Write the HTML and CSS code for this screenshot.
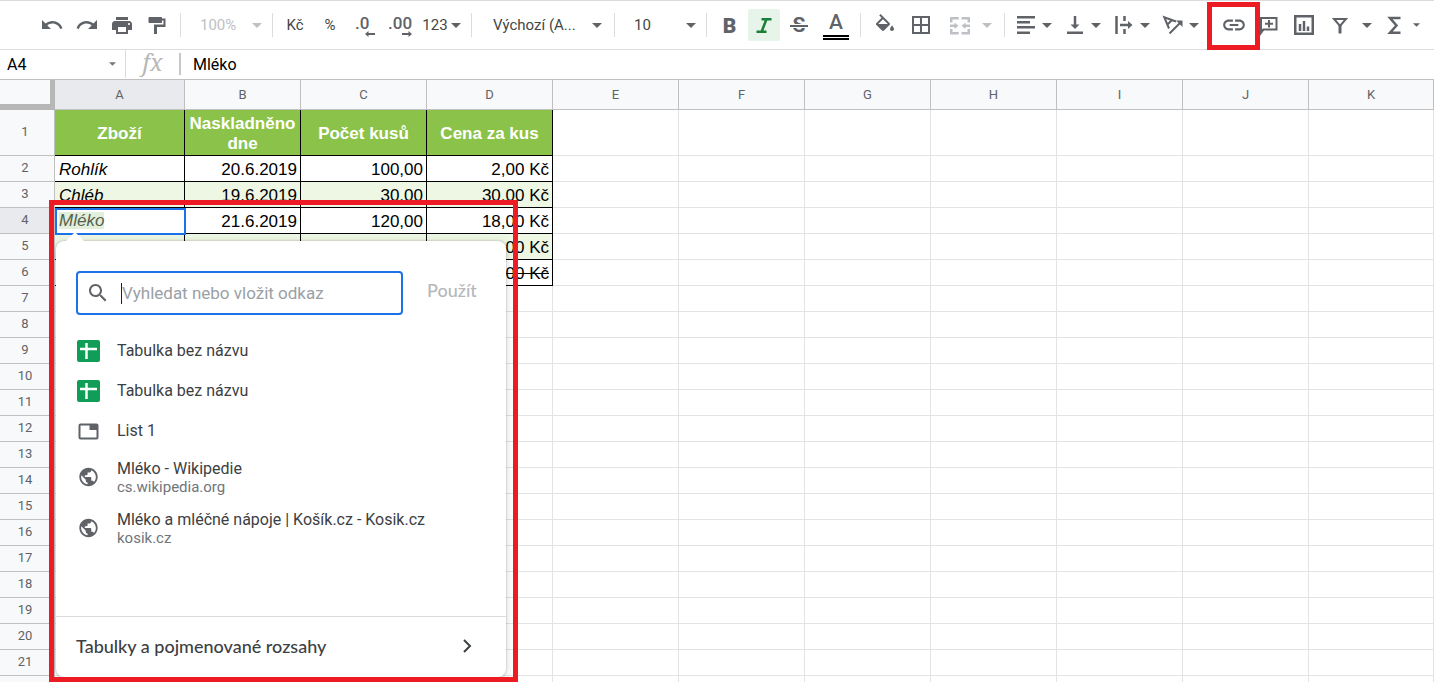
FILE: index.html
```html
<!DOCTYPE html>
<html lang="cs">
<head>
<meta charset="utf-8">
<title>Tabulka bez názvu</title>
<link rel="stylesheet" href="styles.css">
</head>
<body>
<svg class="defs" aria-hidden="true">
  <symbol id="caret" viewBox="0 0 10 5"><path d="M0 0h10L5 5z"/></symbol>
  <symbol id="globe" viewBox="0 0 24 24"><path d="M12 2C6.48 2 2 6.48 2 12s4.480 10 10 10 10-4.480 10-10S17.520 2 12 2zm-1 17.930c-3.950-.490-7-3.850-7-7.930 0-.620.080-1.210.210-1.790L9 15v1c0 1.100.9 2 2 2v1.930zm6.900-2.540c-.260-.810-1-1.390-1.900-1.390h-1v-3c0-.550-.450-1-1-1H8v-2h2c.550 0 1-.450 1-1V7h2c1.100 0 2-.9 2-2v-.410c2.930 1.190 5 4.060 5 7.410 0 2.080-.8 3.970-2.100 5.390z"/></symbol>
  <symbol id="sheet" viewBox="0 0 23 22"><rect width="23" height="22" rx="2" fill="#0f9d58"/><path d="M3 9h17M9.500 3v16" stroke="#fff" stroke-width="2.500" fill="none"/></symbol>
</svg>

<header class="toolbar" role="toolbar" aria-label="Panel nástrojů">
  <button class="tool" aria-label="Zpět"><svg class="icon" viewBox="0 0 24 24"><path d="M12.500 8c-2.650 0-5.050.990-6.900 2.600L2 7v9h9l-3.620-3.620c1.390-1.160 3.160-1.880 5.120-1.880 3.540 0 6.550 2.310 7.600 5.500l2.370-.780C21.080 11.030 17.150 8 12.500 8z"/></svg></button>
  <button class="tool" aria-label="Znovu"><svg class="icon" viewBox="0 0 24 24"><path d="M18.400 10.600C16.550 8.990 14.150 8 11.500 8c-4.650 0-8.580 3.030-9.960 7.220L3.900 16c1.050-3.190 4.050-5.500 7.600-5.500 1.950 0 3.730.720 5.120 1.880L13 16h9V7l-3.600 3.600z"/></svg></button>
  <button class="tool" aria-label="Tisk"><svg class="icon" viewBox="0 0 24 24"><path d="M19 8H5c-1.660 0-3 1.340-3 3v6h4v4h12v-4h4v-6c0-1.660-1.340-3-3-3zm-3 11H8v-5h8v5zm3-7c-.550 0-1-.450-1-1s.450-1 1-1 1 .450 1 1-.450 1-1 1zM18 4H6v3h12V4z"/></svg></button>
  <button class="tool" aria-label="Kopírovat formát"><svg class="icon" viewBox="0 0 24 24"><path d="M4.500 4H16c.6 0 1 .4 1 1v.5h3.500V14H12v7H9v-9.500h9.500v-4H17V9c0 .6-.4 1-1 1H4.500c-.6 0-1-.4-1-1V5c0-.6.4-1 1-1z"/></svg></button>
  <span class="sep"></span>
  <label class="pick off"><select aria-label="Lupa" disabled><option>100%</option></select><svg class="caret"><use href="#caret"/></svg></label>
  <span class="sep"></span>
  <button class="tool text" aria-label="Formát měny">Kč</button>
  <button class="tool text" aria-label="Formát procent">%</button>
  <button class="tool" aria-label="Méně desetinných míst"><span class="decimal">.0<svg class="arrow" viewBox="0 0 10 6"><path d="M0 3l3.500-3v2H10v2H3.500v2z"/></svg></span></button>
  <button class="tool" aria-label="Více desetinných míst"><span class="decimal more">.00<svg class="arrow" viewBox="0 0 10 6"><path d="M10 3L6.500 0v2H0v2h6.500v2z"/></svg></span></button>
  <button class="tool text formats">123<svg class="caret"><use href="#caret"/></svg></button>
  <span class="sep"></span>
  <label class="pick font"><select aria-label="Písmo"><option>Výchozí (A...</option></select><svg class="caret"><use href="#caret"/></svg></label>
  <span class="sep"></span>
  <label class="pick"><select aria-label="Velikost písma"><option>10</option></select><svg class="caret"><use href="#caret"/></svg></label>
  <span class="sep"></span>
  <button class="tool bold" aria-label="Tučné">B</button>
  <button class="tool" aria-label="Kurzíva"><span class="active"><svg class="icon" viewBox="0 0 24 24"><path class="line heavy" d="M9.500 6.200h10M4.500 18.800h10M14.500 6l-5 13"/></svg></span></button>
  <button class="tool" aria-label="Přeškrtnutí"><span class="strike">S</span></button>
  <button class="tool wide" aria-label="Barva textu"><span class="ink">A</span></button>
  <span class="sep"></span>
  <button class="tool wide" aria-label="Barva výplně"><svg class="icon" viewBox="0 -1 24 24"><path d="M16.560 8.940L7.620 0 6.210 1.410l2.380 2.380-5.150 5.150c-.590.590-.590 1.540 0 2.120l5.500 5.500c.290.290.680.440 1.060.440s.770-.150 1.060-.440l5.500-5.500c.590-.580.590-1.530 0-2.120zM5.210 10L10 5.210 14.790 10H5.210zM19 11.500s-2 2.170-2 3.500c0 1.100.9 2 2 2s2-.9 2-2c0-1.330-2-3.500-2-3.500z"/></svg></button>
  <button class="tool" aria-label="Ohraničení"><svg class="icon" viewBox="0 0 24 24"><path d="M3 3v18h18V3H3zm8 16H5v-6h6v6zm0-8H5V5h6v6zm8 8h-6v-6h6v6zm0-8h-6V5h6v6z"/></svg></button>
  <button class="tool menu off merge" aria-label="Sloučit buňky"><svg class="icon" viewBox="0 0 24 24"><path class="line heavy" d="M3.250 9.500V5.250h7.500M13.500 5.250h7.250V9.500M3.250 16v4.250h7.500M13.500 20.250h7.250V16M2 12.750h5M22 12.750h-5"/><path d="M6.500 9.500l4 3.250-4 3.250zM17.500 9.500l-4 3.250 4 3.250z"/></svg><svg class="caret"><use href="#caret"/></svg></button>
  <span class="sep"></span>
  <button class="tool menu" aria-label="Vodorovné zarovnání"><svg class="icon" viewBox="0 0 24 24"><path class="line heavy" d="M3 4.250h18M3 9.250h13M3 14.250h18M3 19.750h13"/></svg><svg class="caret"><use href="#caret"/></svg></button>
  <button class="tool menu" aria-label="Svislé zarovnání"><svg class="icon" viewBox="0 0 24 24"><path class="line heavy" d="M4 19.750h16M12 3v10"/><path d="M7.500 11.500h9l-4.500 4.500z"/></svg><svg class="caret"><use href="#caret"/></svg></button>
  <button class="tool menu" aria-label="Zalamování textu"><svg class="icon" viewBox="0 0 24 24"><path class="line heavy" d="M4.500 3v18M12.500 3v5M12.500 16v5M8 12h10"/><path d="M16 8l4.500 4-4.500 4z"/></svg><svg class="caret"><use href="#caret"/></svg></button>
  <button class="tool menu" aria-label="Otočení textu"><svg class="icon" viewBox="0 0 24 24"><path class="line" d="M8.500 20.500L19.500 9.500M8 15.500L3.250 4.250 15 8.500M6.500 11.500l4.500-4.500"/><path d="M15 7.500h6.500V14z"/></svg><svg class="caret"><use href="#caret"/></svg></button>
  <span class="sep"></span>
  <span class="marked">
    <button class="tool" aria-label="Vložit odkaz"><svg class="icon large" viewBox="0 0 24 24"><path d="M3.900 12c0-1.710 1.390-3.100 3.100-3.100h4V7H7c-2.760 0-5 2.240-5 5s2.240 5 5 5h4v-1.900H7c-1.710 0-3.100-1.390-3.100-3.100zM8 13h8v-2H8v2zm9-6h-4v1.900h4c1.710 0 3.100 1.390 3.100 3.100s-1.390 3.100-3.100 3.100h-4V17h4c2.760 0 5-2.240 5-5s-2.240-5-5-5z"/></svg></button>
    <span class="frame link-frame"></span>
  </span>
  <button class="tool" aria-label="Vložit komentář"><svg class="icon" viewBox="0 0 24 24"><path class="line" d="M4 20V5h15.500v11.500H6.500zM12 7v7.500M8 10.750h8"/><path d="M3 16h5l-5 5z"/></svg></button>
  <button class="tool" aria-label="Vložit graf"><svg class="icon" viewBox="0 0 24 24"><path class="line heavy" d="M3.250 3.250h17.500v17.500H3.250zM8 11v7M12 8v10M16 13.500V18"/></svg></button>
  <button class="tool menu filter" aria-label="Filtr"><svg class="icon" viewBox="0 0 24 24"><path class="line" d="M6 6h12l-6 7z"/><path class="line stem" d="M12 12v8.500"/></svg><svg class="caret"><use href="#caret"/></svg></button>
  <button class="tool menu sum" aria-label="Funkce"><svg class="icon" viewBox="0 0 24 24"><path class="line heavy" d="M18.500 5H8l6.500 7.500L8 19.750h10.500"/></svg><svg class="caret small"><use href="#caret"/></svg></button>
</header>

<div class="formula-bar">
  <label class="name-box"><input aria-label="Pole názvu" value="A4"><svg class="caret small"><use href="#caret"/></svg></label>
  <span class="fx">fx</span>
  <input class="formula" aria-label="Vzorec" value="Mléko">
</div>

<main class="sheet">
  <table class="grid">
    <colgroup><col class="c-head"><col class="c-a"><col class="c-b"><col class="c"><col class="c"><col class="c"><col class="c"><col class="c"><col class="c"><col class="c"><col class="c"><col></colgroup>
    <thead>
      <tr><th class="corner"></th><th class="current">A</th><th>B</th><th>C</th><th>D</th><th>E</th><th>F</th><th>G</th><th>H</th><th>I</th><th>J</th><th>K</th></tr>
    </thead>
    <tbody>
      <tr class="title"><th>1</th><td>Zboží</td><td>Naskladněno dne</td><td>Počet kusů</td><td>Cena za kus</td><td></td><td></td><td></td><td></td><td></td><td></td><td></td></tr>
      <tr class="data"><th>2</th><td>Rohlík</td><td>20.6.2019</td><td>100,00</td><td>2,00 Kč</td><td></td><td></td><td></td><td></td><td></td><td></td><td></td></tr>
      <tr class="data band"><th>3</th><td>Chléb</td><td>19.6.2019</td><td>30,00</td><td>30,00 Kč</td><td></td><td></td><td></td><td></td><td></td><td></td><td></td></tr>
      <tr class="data"><th class="current">4</th><td><span class="linked">Mléko</span></td><td>21.6.2019</td><td>120,00</td><td>18,00 Kč</td><td></td><td></td><td></td><td></td><td></td><td></td><td></td></tr>
      <tr class="data band"><th>5</th><td></td><td></td><td></td><td>,00 Kč</td><td></td><td></td><td></td><td></td><td></td><td></td><td></td></tr>
      <tr class="data"><th>6</th><td></td><td></td><td></td><td><s>,00 Kč</s></td><td></td><td></td><td></td><td></td><td></td><td></td><td></td></tr>
      <tr><th>7</th><td></td><td></td><td></td><td></td><td></td><td></td><td></td><td></td><td></td><td></td><td></td></tr>
      <tr><th>8</th><td></td><td></td><td></td><td></td><td></td><td></td><td></td><td></td><td></td><td></td><td></td></tr>
      <tr><th>9</th><td></td><td></td><td></td><td></td><td></td><td></td><td></td><td></td><td></td><td></td><td></td></tr>
      <tr><th>10</th><td></td><td></td><td></td><td></td><td></td><td></td><td></td><td></td><td></td><td></td><td></td></tr>
      <tr><th>11</th><td></td><td></td><td></td><td></td><td></td><td></td><td></td><td></td><td></td><td></td><td></td></tr>
      <tr><th>12</th><td></td><td></td><td></td><td></td><td></td><td></td><td></td><td></td><td></td><td></td><td></td></tr>
      <tr><th>13</th><td></td><td></td><td></td><td></td><td></td><td></td><td></td><td></td><td></td><td></td><td></td></tr>
      <tr><th>14</th><td></td><td></td><td></td><td></td><td></td><td></td><td></td><td></td><td></td><td></td><td></td></tr>
      <tr><th>15</th><td></td><td></td><td></td><td></td><td></td><td></td><td></td><td></td><td></td><td></td><td></td></tr>
      <tr><th>16</th><td></td><td></td><td></td><td></td><td></td><td></td><td></td><td></td><td></td><td></td><td></td></tr>
      <tr><th>17</th><td></td><td></td><td></td><td></td><td></td><td></td><td></td><td></td><td></td><td></td><td></td></tr>
      <tr><th>18</th><td></td><td></td><td></td><td></td><td></td><td></td><td></td><td></td><td></td><td></td><td></td></tr>
      <tr><th>19</th><td></td><td></td><td></td><td></td><td></td><td></td><td></td><td></td><td></td><td></td><td></td></tr>
      <tr><th>20</th><td></td><td></td><td></td><td></td><td></td><td></td><td></td><td></td><td></td><td></td><td></td></tr>
      <tr><th>21</th><td></td><td></td><td></td><td></td><td></td><td></td><td></td><td></td><td></td><td></td><td></td></tr>
      <tr><th></th><td></td><td></td><td></td><td></td><td></td><td></td><td></td><td></td><td></td><td></td><td></td></tr>
    </tbody>
  </table>

  <div class="selection"></div>

  <section class="link-dialog" aria-label="Vložit odkaz">
    <div class="search-row">
      <label class="search">
        <svg class="icon" viewBox="0 0 24 24"><path d="M15.500 14h-.790l-.280-.270C15.410 12.590 16 11.110 16 9.500 16 5.910 13.090 3 9.500 3S3 5.910 3 9.500 5.910 16 9.500 16c1.610 0 3.090-.590 4.230-1.570l.270.280v.790l5 4.990L20.490 19l-4.990-5zm-6 0C7.010 14 5 11.990 5 9.500S7.010 5 9.500 5 14 7.010 14 9.500 11.990 14 9.500 14z"/></svg>
        <span class="cursor"></span>
        <input aria-label="Odkaz" placeholder="Vyhledat nebo vložit odkaz">
      </label>
      <button class="apply" disabled>Použít</button>
    </div>
    <ul class="results">
      <li><a href="#"><svg class="sheet-icon"><use href="#sheet"/></svg><span class="label">Tabulka bez názvu</span></a></li>
      <li><a href="#"><svg class="sheet-icon"><use href="#sheet"/></svg><span class="label">Tabulka bez názvu</span></a></li>
      <li><a href="#"><svg class="sheet-icon" viewBox="0 0 23 22"><path class="line" d="M3.500 4.500h16c.8 0 1 .5 1 1v12c0 .5-.2 1-1 1h-16c-.8 0-1-.5-1-1v-12c0-.5.2-1 1-1z"/><path d="M12.500 4.500H20V10h-7.500z"/></svg><span class="label">List 1</span></a></li>
      <li class="site"><a href="#"><svg class="sheet-icon"><use href="#globe"/></svg><span class="label">Mléko - Wikipedie<small>cs.wikipedia.org</small></span></a></li>
      <li class="site"><a href="#"><svg class="sheet-icon"><use href="#globe"/></svg><span class="label">Mléko a mléčné nápoje | Košík.cz - Kosik.cz<small>kosik.cz</small></span></a></li>
    </ul>
    <button class="ranges">Tabulky a pojmenované rozsahy<svg class="icon" viewBox="0 0 24 24"><path class="line" d="M9 6l6 6-6 6"/></svg></button>
  </section>
  <div class="frame dialog-frame"></div>
</main>
</body>
</html>
```

FILE: styles.css
```css
* { box-sizing: border-box; }

body {
  margin: 0;
  height: 100vh;
  overflow: hidden;
  display: flex;
  flex-direction: column;
  background: #fff;
  color: #000;
  font-family: Roboto, sans-serif;
}

button, input, select { font: inherit; color: inherit; border: 0; padding: 0; background: none; outline: 0; }
svg { fill: currentColor; flex: none; }
.defs { position: absolute; width: 0; height: 0; }
.icon { width: 24px; height: 24px; }
.icon.large { width: 26px; height: 26px; }
.line { fill: none; stroke: currentColor; stroke-width: 2; }
.heavy { stroke-width: 2.5; }
.stem { stroke-width: 3; }
.caret { width: 10px; height: 5px; }
.caret.small { width: 7px; height: 4px; }

/* Toolbar */
.toolbar {
  flex: none;
  display: flex;
  align-items: center;
  height: 50px;
  padding-left: 35px;
  border-top: 1px solid #dadce0;
  border-bottom: 1px solid #dadce0;
  color: #5f6368;
  font-size: 15px;
}
.tool {
  flex: none;
  display: flex;
  align-items: center;
  justify-content: center;
  width: 35px;
  height: 32px;
  padding-right: 1px;
}
.tool.wide { width: 38px; padding-right: 0; }
.tool.text, .pick { color: #444746; }
.tool.formats { width: 48px; gap: 3px; }
.tool.formats .caret { color: #5f6368; }
.tool.menu { width: 49px; gap: 4px; justify-content: flex-start; padding-left: 4px; }
.tool.merge { width: 60px; gap: 10px; padding-left: 9px; }
.tool.filter { width: 57px; gap: 10px; padding-left: 6px; }
.tool.sum { gap: 7px; padding-left: 3px; }
.toolbar .off { color: #bdc1c6; }
.sep { flex: none; width: 1px; height: 24px; margin: 0 5px; background: #dadce0; }

.pick { flex: none; display: flex; align-items: center; width: 81px; padding: 0 5px 0 14px; }
.pick.font { width: 132px; padding: 0 7px 0 16px; }
.pick select { flex: 1; min-width: 0; appearance: none; opacity: 1; }
.pick .caret { color: #5f6368; }
.pick.off .caret { color: #bdc1c6; }

.decimal {
  display: flex;
  flex-direction: column;
  width: 20px;
  padding-top: 2px;
  font-size: 17px;
  font-weight: 500;
  line-height: 16px;
  text-align: left;
}
.decimal.more { width: 24px; }
.arrow { width: 10px; height: 6px; align-self: flex-end; }
.tool.bold { padding: 1px 0 0; font-size: 21px; font-weight: 900; }
.active {
  display: flex;
  flex: none;
  align-items: center;
  justify-content: center;
  width: 32px;
  height: 32px;
  border-radius: 2px;
  background: #e6f4ea;
  color: #188038;
}
.strike { position: relative; font-size: 21px; font-weight: 700; line-height: 24px; }
.strike::after {
  content: "";
  position: absolute;
  left: -3px;
  right: -3px;
  top: 12px;
  height: 2px;
  background: #5f6368;
  box-shadow: 0 -1px #fff, 0 1px #fff;
}
.ink {
  width: 26px;
  height: 30px;
  border-bottom: 5px double #000;
  font-size: 21px;
  font-weight: 500;
  line-height: 25px;
}
.marked { position: relative; }

/* Highlight frames */
.frame { position: absolute; border: 5px solid #ed1c24; pointer-events: none; }
.link-frame { left: -10px; top: -7px; width: 53px; height: 48px; }
.dialog-frame { left: 49px; top: 120px; width: 469px; height: 482px; }

/* Formula bar */
.formula-bar { flex: none; display: flex; align-items: center; height: 30px; padding-bottom: 1px; border-bottom: 1px solid #c0c0c0; font-size: 16px; }
.name-box { display: flex; align-items: center; width: 126px; height: 28px; padding: 0 9px 0 7px; border-right: 1px solid #dadce0; }
.name-box input { flex: 1; min-width: 0; }
.name-box .caret { color: #777; }
.fx {
  width: 55px;
  height: 22px;
  border-right: 2px solid #c6c6c6;
  color: #b7b7b7;
  font: italic 23px/19px "Noto Serif", "Liberation Serif", serif;
  text-align: center;
}
.formula { flex: 1; padding-left: 12px; }

/* Grid */
.sheet { position: relative; flex: 1; min-height: 0; overflow: hidden; }
.grid { width: 100%; table-layout: fixed; border-collapse: separate; border-spacing: 0; }
.c-head { width: 55px; }
.c-a { width: 130px; }
.c-b { width: 116px; }
.c { width: 126px; }
.grid th {
  padding: 2px 4px 3px 0;
  border: solid #c0c0c0;
  border-width: 0 1px 1px 0;
  background: #f8f9fa;
  color: #5f6368;
  font-size: 13px;
  font-weight: 400;
  line-height: 20px;
}
.grid thead th { height: 30px; padding: 0; }
.grid .corner { border-width: 0 5px 6px 0; border-color: #b7b7b7; }
.grid .current { background: #e8eaed; }
.grid td {
  height: 26px;
  padding: 4px 3px 1px;
  border: solid #e2e3e3;
  border-width: 0 1px 1px 0;
  font-family: "Liberation Sans", Arial, sans-serif;
  font-size: 17px;
  line-height: 20px;
  white-space: nowrap;
}
.grid .title td { height: 46px; white-space: normal; text-align: center; font-weight: 700; color: #fff; }
.data td { text-align: right; }
.grid .data td:nth-child(2) { padding-left: 4px; text-align: left; font-style: italic; }
.title td:nth-child(-n+5), .data td:nth-child(-n+5) { border-color: #000; }
.title td:nth-child(-n+5) { background: #8bc34a; }
.band td:nth-child(-n+5) { background: #eef7e3; }
.linked { display: block; width: max-content; margin-bottom: 3px; line-height: 17px; background: #e2efda; color: #54604f; }

.selection { position: absolute; left: 55px; top: 128px; width: 131px; height: 27px; border: 2px solid #1a73e8; }

/* Link dialog */
.link-dialog {
  position: absolute;
  left: 56px;
  top: 161px;
  width: 450px;
  padding-top: 30px;
  border-radius: 8px;
  background: #fff;
  box-shadow: 0 0 2px rgba(60, 64, 67, .4), 0 2px 10px rgba(60, 64, 67, .2);
  color: #3c4043;
}
.link-dialog::before {
  content: "";
  position: absolute;
  left: 9px;
  top: -9px;
  width: 20px;
  height: 10px;
  background: #fff;
  clip-path: polygon(50% 0, 100% 100%, 0 100%);
}
.search-row { display: flex; align-items: flex-start; gap: 24px; padding: 0 20px; }
.search {
  position: relative;
  display: flex;
  align-items: center;
  width: 327px;
  height: 44px;
  padding-left: 8px;
  border: 2px solid #1a73e8;
  border-radius: 4px;
  color: #5f6368;
}
.cursor { width: 1px; height: 21px; margin-left: 11px; background: #202124; }
.search input { flex: 1; min-width: 0; font-size: 17px; }
.search input::placeholder { color: #9aa0a6; opacity: 1; }
.apply { height: 38px; color: #b5b7ba; font: 500 18px/38px Lato, sans-serif; }
.results { min-height: 285px; margin: 0; padding: 16px 20px 0 21px; list-style: none; font-size: 16px; }
.results a { display: flex; align-items: center; gap: 17px; height: 40px; color: inherit; text-decoration: none; }
.results .site a { height: 51px; }
.sheet-icon { width: 23px; height: 22px; color: #5f6368; }
.label { line-height: 20px; }
.site .label { padding-top: 2px; }
.label small { display: block; color: #70757a; font-size: 15px; line-height: 17px; }
.ranges {
  display: flex;
  align-items: center;
  justify-content: space-between;
  width: 100%;
  height: 61px;
  margin-top: 16px;
  padding: 0 27px 2px 20px;
  font: 500 18px/24px Lato, sans-serif;
}
.results + .ranges { border-top: 1px solid #dadce0; }
```
